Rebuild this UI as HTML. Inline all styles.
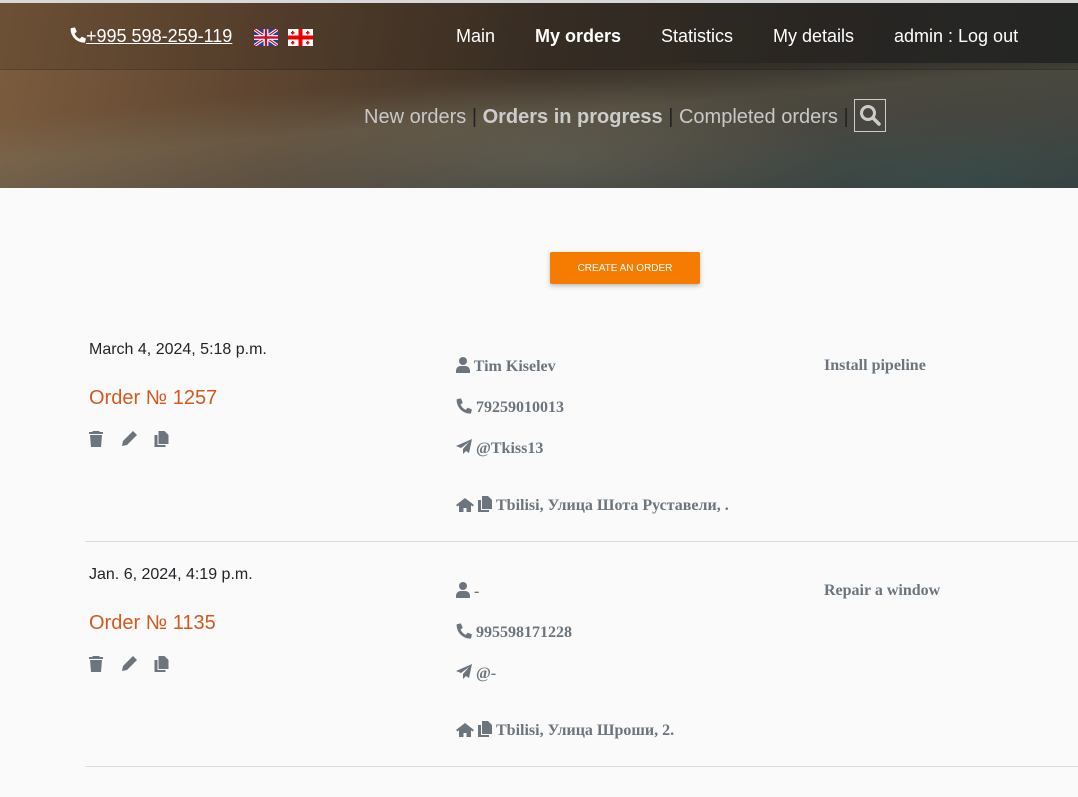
<!DOCTYPE html>
<html><head><meta charset="utf-8"><style>
*{margin:0;padding:0;box-sizing:border-box}
body{width:1078px;height:797px;overflow:hidden;background:#fafafa;font-family:"Liberation Sans",sans-serif;position:relative}
.hdr{position:absolute;left:0;top:0;width:1078px;height:188px;border-top:3px solid #d8d8d8;overflow:hidden;
background:
radial-gradient(ellipse 420px 120px at 560px 160px,rgba(110,110,95,.55),transparent 70%),
radial-gradient(ellipse 400px 100px at 950px 180px,rgba(40,80,80,.6),transparent 70%),
linear-gradient(100deg,#7c5c3e 0%,#5e4530 25%,#3e3328 50%,#2e2b27 75%,#2a2c2a 100%);}
.hdr:after{content:"";position:absolute;left:0;top:60px;width:1078px;height:125px;
background:linear-gradient(175deg,transparent 0%,transparent 25%,rgba(120,115,95,.4) 45%,rgba(95,95,85,.5) 65%,rgba(60,75,75,.6) 100%)}
.nav{position:absolute;left:0;top:3px;width:1078px;height:67px;background:rgba(0,0,0,.12);border-bottom:1px solid rgba(0,0,0,.15);z-index:2}
.t{position:absolute;color:#fff;font-size:18px;z-index:3;white-space:nowrap}
.sub{position:absolute;top:106px;left:364px;font-size:20px;color:#c8c8c8;z-index:3;white-space:nowrap}
.sub b{color:#ccc}
.sub .sep{color:#222}
.srch{position:absolute;left:854px;top:99px;width:32px;height:33px;border:1px solid #ccc;z-index:3}
.btn{position:absolute;left:550px;top:252px;width:150px;height:32px;background:#f57c00;border-radius:2px;color:#fff;font-size:10px;text-align:center;line-height:34px;box-shadow:0 2px 5px rgba(0,0,0,.25)}
.date{position:absolute;left:89px;font-size:16px;color:#212529}
.ord{position:absolute;left:89px;font-size:20px;color:#d35a1f}
.f{position:absolute;font-family:"Liberation Serif",serif;font-weight:bold;font-size:16px;color:#6c757d;white-space:nowrap}
.f svg{vertical-align:-2px}
.hr{position:absolute;left:85px;width:993px;height:1px;background:#dcdcdc}
.ic{position:absolute}
</style></head><body>
<div class="hdr"></div>
<div class="nav"></div>
<div class="t" style="left:70px;top:26px;text-decoration:underline"><svg width="16" height="16" viewBox="0 0 512 512" style="vertical-align:-1px"><path fill="#fff" d="M497 361l-107-46c-10-4-22-1-28 7l-47 58c-75-35-135-95-170-170l58-47c8-7 11-18 7-28L164 28c-5-11-16-16-27-14L38 37C27 40 20 49 20 60c0 243 197 440 440 440 11 0 20-7 23-18l23-99c3-11-3-23-14-27z"/></svg>+995 598-259-119</div>
<svg class="ic" style="left:254px;top:29px;z-index:3" width="24" height="17" viewBox="0 0 60 42"><rect width="60" height="42" fill="#2a3f8f"/><path d="M0 0L60 42M60 0L0 42" stroke="#fff" stroke-width="8"/><path d="M0 0L60 42M60 0L0 42" stroke="#c8102e" stroke-width="3"/><path d="M30 0V42M0 21H60" stroke="#fff" stroke-width="12"/><path d="M30 0V42M0 21H60" stroke="#c8102e" stroke-width="6"/></svg>
<svg class="ic" style="left:288px;top:29px;z-index:3" width="25" height="17" viewBox="0 0 25 17"><rect width="25" height="17" fill="#fff"/><rect x="10.5" width="4" height="17" fill="#e00"/><rect y="6.5" width="25" height="4" fill="#e00"/><g fill="#e00"><rect x="4" y="2" width="1.5" height="3.5"/><rect x="3" y="3" width="3.5" height="1.5"/><rect x="19" y="2" width="1.5" height="3.5"/><rect x="18" y="3" width="3.5" height="1.5"/><rect x="4" y="12" width="1.5" height="3.5"/><rect x="3" y="13" width="3.5" height="1.5"/><rect x="19" y="12" width="1.5" height="3.5"/><rect x="18" y="13" width="3.5" height="1.5"/></g></svg>
<div class="t" style="left:456px;top:26px">Main</div>
<div class="t" style="left:535px;top:26px;font-weight:bold">My orders</div>
<div class="t" style="left:661px;top:26px">Statistics</div>
<div class="t" style="left:773px;top:26px">My details</div>
<div class="t" style="left:894px;top:26px">admin : Log out</div>
<div class="sub">New orders <span class="sep">|</span> <b>Orders in progress</b> <span class="sep">|</span> Completed orders <span class="sep">|</span></div>
<div class="srch"><svg width="30" height="30" viewBox="0 0 30 30"><circle cx="13" cy="13" r="6.5" fill="none" stroke="#ccc" stroke-width="3"/><path d="M18 18l6 6" stroke="#ccc" stroke-width="3.5" stroke-linecap="round"/></svg></div>
<div class="btn">CREATE AN ORDER</div>

<div class="date" style="top:341px">March 4, 2024, 5:18 p.m.</div>
<div class="ord" style="top:387px">Order № 1257</div>
<div class="f" style="left:456px;top:357px"><svg width="14" height="16" viewBox="0 0 14 16"><circle cx="7" cy="4" r="4" fill="#6c757d"/><path d="M0 16v-2c0-3 2-5 5-5h4c3 0 5 2 5 5v2z" fill="#6c757d"/></svg> Tim Kiselev</div>
<div class="f" style="left:456px;top:398px"><svg width="16" height="16" viewBox="0 0 512 512"><path fill="#6c757d" d="M497 361l-107-46c-10-4-22-1-28 7l-47 58c-75-35-135-95-170-170l58-47c8-7 11-18 7-28L164 28c-5-11-16-16-27-14L38 37C27 40 20 49 20 60c0 243 197 440 440 440 11 0 20-7 23-18l23-99c3-11-3-23-14-27z"/></svg> 79259010013</div>
<div class="f" style="left:456px;top:439px"><svg width="16" height="16" viewBox="0 0 16 16"><path d="M16 0L0 7l5 2 8-6-6 7v5l3-3 3 2z" fill="#6c757d"/></svg> @Tkiss13</div>
<div class="f" style="left:456px;top:496px"><svg width="18" height="15" viewBox="0 0 18 15"><path d="M9 1L0 8l1.5 1.5L3 8.3V15h4.5v-4h3v4H15V8.3l1.5 1.2L18 8z" fill="#6c757d"/></svg> <svg width="14" height="16" viewBox="0 0 14 16"><path d="M4 0h6l4 4v9H4z M0 4h3v10h8v2H0z" fill="#6c757d"/></svg>&nbsp;Tbilisi, Улица Шота Руставели, .</div>
<div class="f" style="left:824px;top:357px">Install pipeline</div>
<div class="hr" style="top:541px"></div>

<div class="date" style="top:566px">Jan. 6, 2024, 4:19 p.m.</div>
<div class="ord" style="top:612px">Order № 1135</div>
<div class="f" style="left:456px;top:582px"><svg width="14" height="16" viewBox="0 0 14 16"><circle cx="7" cy="4" r="4" fill="#6c757d"/><path d="M0 16v-2c0-3 2-5 5-5h4c3 0 5 2 5 5v2z" fill="#6c757d"/></svg> -</div>
<div class="f" style="left:456px;top:623px"><svg width="16" height="16" viewBox="0 0 512 512"><path fill="#6c757d" d="M497 361l-107-46c-10-4-22-1-28 7l-47 58c-75-35-135-95-170-170l58-47c8-7 11-18 7-28L164 28c-5-11-16-16-27-14L38 37C27 40 20 49 20 60c0 243 197 440 440 440 11 0 20-7 23-18l23-99c3-11-3-23-14-27z"/></svg> 995598171228</div>
<div class="f" style="left:456px;top:664px"><svg width="16" height="16" viewBox="0 0 16 16"><path d="M16 0L0 7l5 2 8-6-6 7v5l3-3 3 2z" fill="#6c757d"/></svg> @-</div>
<div class="f" style="left:456px;top:721px"><svg width="18" height="15" viewBox="0 0 18 15"><path d="M9 1L0 8l1.5 1.5L3 8.3V15h4.5v-4h3v4H15V8.3l1.5 1.2L18 8z" fill="#6c757d"/></svg> <svg width="14" height="16" viewBox="0 0 14 16"><path d="M4 0h6l4 4v9H4z M0 4h3v10h8v2H0z" fill="#6c757d"/></svg>&nbsp;Tbilisi, Улица Шроши, 2.</div>
<div class="f" style="left:824px;top:582px">Repair a window</div>
<div class="hr" style="top:766px"></div>

<svg class="ic" style="left:89px;top:431px" width="14" height="16" viewBox="0 0 14 16"><path d="M4 0h6l1 1h3v2H0V1h3z M1 4h12l-1 12H2z" fill="#6c757d"/></svg>
<svg class="ic" style="left:121px;top:431px" width="17" height="16" viewBox="0 0 17 16"><path d="M12 0l4 4-10 10-5 1 1-5z" fill="#6c757d"/></svg>
<svg class="ic" style="left:154px;top:431px" width="15" height="16" viewBox="0 0 14 16"><path d="M4 0h6l4 4v9H4z M0 4h3v10h8v2H0z" fill="#6c757d"/></svg>
<svg class="ic" style="left:89px;top:656px" width="14" height="16" viewBox="0 0 14 16"><path d="M4 0h6l1 1h3v2H0V1h3z M1 4h12l-1 12H2z" fill="#6c757d"/></svg>
<svg class="ic" style="left:121px;top:656px" width="17" height="16" viewBox="0 0 17 16"><path d="M12 0l4 4-10 10-5 1 1-5z" fill="#6c757d"/></svg>
<svg class="ic" style="left:154px;top:656px" width="15" height="16" viewBox="0 0 14 16"><path d="M4 0h6l4 4v9H4z M0 4h3v10h8v2H0z" fill="#6c757d"/></svg>
</body></html>
